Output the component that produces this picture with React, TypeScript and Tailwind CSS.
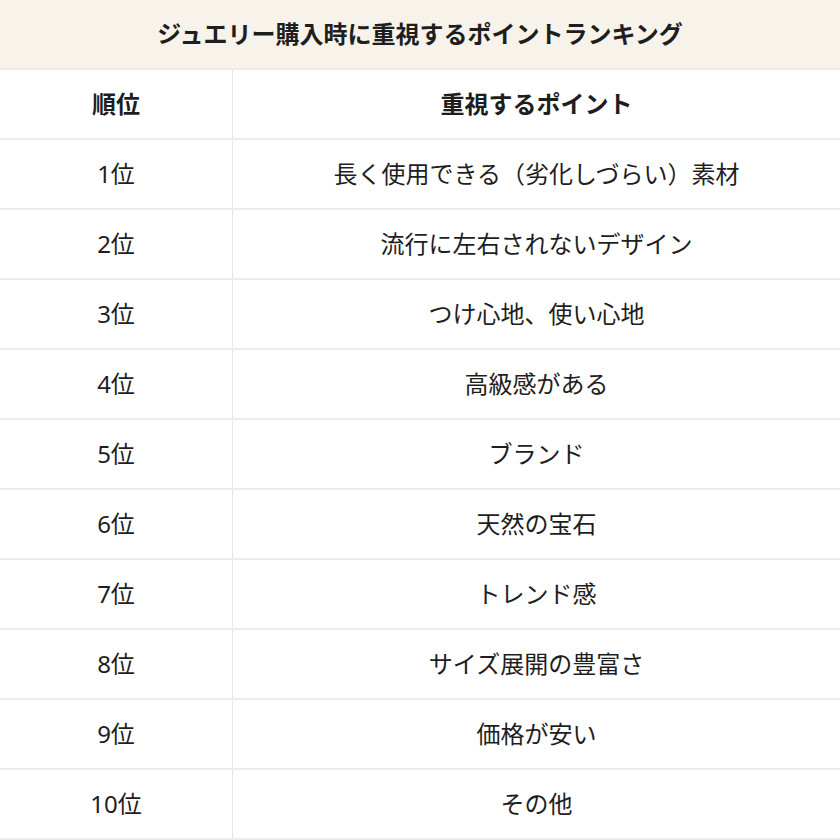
import React from 'react';

const rows = [
  '長く使用できる（劣化しづらい）素材',
  '流行に左右されないデザイン',
  'つけ心地、使い心地',
  '高級感がある',
  'ブランド',
  '天然の宝石',
  'トレンド感',
  'サイズ展開の豊富さ',
  '価格が安い',
  'その他',
];

export default function App() {
  return (
    <div
      className="w-[840px] h-[840px] bg-white text-[#1e1e1e] overflow-hidden"
      style={{ fontFamily: '"Noto Sans", "Noto Sans CJK JP", sans-serif' }}
    >
      {/* Title */}
      <div className="h-[70px] bg-[#f7f3ea] border-b-2 border-[#ececec] flex items-center justify-center text-[24px] font-bold">
        ジュエリー購入時に重視するポイントランキング
      </div>

      {/* Header */}
      <div className="h-[70px] grid grid-cols-[233px_1fr] border-b-2 border-[#ececec] text-[24px] font-bold">
        <div className="flex items-center justify-center border-r border-[#e6e6e6]">順位</div>
        <div className="flex items-center justify-center">重視するポイント</div>
      </div>

      {rows.map((label, i) => (
        <div
          key={i}
          className="h-[70px] grid grid-cols-[233px_1fr] border-b-2 border-[#ececec] text-[24px]"
        >
          <div className="flex items-center justify-center border-r border-[#e6e6e6]">{i + 1}位</div>
          <div className="flex items-center justify-center">{label}</div>
        </div>
      ))}
    </div>
  );
}
